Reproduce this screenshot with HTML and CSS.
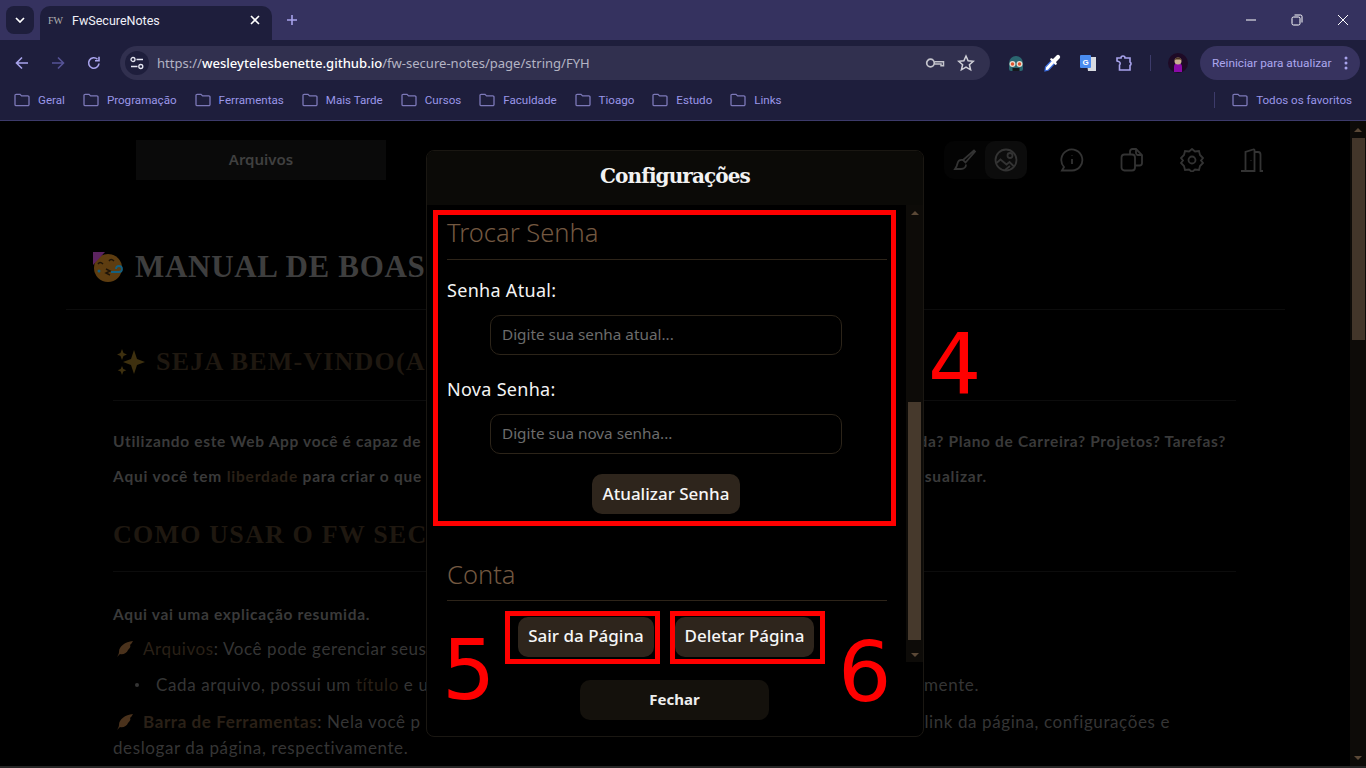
FILE: index.html
```html
<!DOCTYPE html>
<html lang="pt-BR">
<head>
<meta charset="utf-8">
<title>FwSecureNotes</title>
<link rel="stylesheet" href="styles.css">
</head>
<body>
<svg class="defs" width="0" height="0" aria-hidden="true">
  <symbol id="folder" viewBox="0 0 16 14"><path d="M1 2.500A1.200 1.200 0 0 1 2.200 1.300H6l1.600 1.600h6.200A1.200 1.200 0 0 1 15 4.100v7.400a1.200 1.200 0 0 1-1.200 1.200H2.200A1.200 1.200 0 0 1 1 11.500z" fill="none" stroke="currentColor" stroke-width="1.300"/></symbol>
  <symbol id="leaf" viewBox="0 0 18 18"><path d="M1 17C2 15 3 14 3 12 3 6 9 2 17 1 16 3 15 4 14 5 15 6 14 8 12 10 11 13 7 15 4 14 3 15 2 16 1 17z" fill="#4a321c"/></symbol>
</svg>
<div class="stage">
  <header class="chrome">
    <div class="tabstrip">
      <button class="tab-menu"><svg width="10" height="6" viewBox="0 0 10 6"><path d="M1 1l4 4 4-4" fill="none" stroke="#fff" stroke-width="1.700"/></svg></button>
      <div class="tab">
        <span class="favicon">FW</span>
        <span class="tab-title">FwSecureNotes</span>
        <svg class="tab-x" width="10" height="10" viewBox="0 0 10 10"><path d="M1 1l8 8M9 1l-8 8" stroke="#fff" stroke-width="1.600"/></svg>
      </div>
      <svg class="tab-plus" width="12" height="12" viewBox="0 0 12 12"><path d="M6 1v10M1 6h10" stroke="#a8a3ec" stroke-width="1.600"/></svg>
      <div class="win-controls">
        <svg width="12" height="12" viewBox="0 0 12 12"><path d="M1 6h10" stroke="#fff"/></svg>
        <svg width="12" height="12" viewBox="0 0 12 12"><rect x="1" y="3" width="8" height="8" rx="1.500" fill="none" stroke="#fff"/><path d="M3.500 1h6a1.500 1.500 0 0 1 1.500 1.500v6" fill="none" stroke="#fff"/></svg>
        <svg width="12" height="12" viewBox="0 0 12 12"><path d="M1 1l10 10M11 1L1 11" stroke="#fff"/></svg>
      </div>
    </div>
    <div class="toolbar">
      <svg class="nav-ico" width="16" height="16" viewBox="0 0 16 16"><path d="M14 8H2.500M8 2.500L2.500 8 8 13.500" fill="none" stroke="#a8a3ec" stroke-width="1.600"/></svg>
      <svg class="nav-ico" width="16" height="16" viewBox="0 0 16 16"><path d="M2 8h11.500M8 2.500L13.500 8 8 13.500" fill="none" stroke="#565396" stroke-width="1.600"/></svg>
      <svg class="nav-ico" width="16" height="16" viewBox="0 0 16 16"><path d="M13 8.500A5.200 5.200 0 1 1 11.500 4.300M13 1.800v4h-4" fill="none" stroke="#a8a3ec" stroke-width="1.600"/></svg>
      <div class="omnibox">
        <span class="tune"><svg width="14" height="14" viewBox="0 0 14 14"><circle cx="3" cy="3.500" r="2" fill="none" stroke="#e6e6f2" stroke-width="1.300"/><path d="M6.500 3.500H13M1 10.500h6.500" stroke="#e6e6f2" stroke-width="1.400"/><circle cx="10.800" cy="10.500" r="2" fill="none" stroke="#e6e6f2" stroke-width="1.300"/></svg></span>
        <span class="url">https://<b>wesleytelesbenette.github.io</b>/fw-secure-notes/page/string/FYH</span>
        <svg class="omni-ico" width="20" height="12" viewBox="0 0 20 12"><circle cx="5.500" cy="6" r="3.800" fill="none" stroke="#c4c4cc" stroke-width="1.700"/><path d="M9.500 4.700h9v4h-2.500v-1.700h-6.500" fill="none" stroke="#c4c4cc" stroke-width="1.500"/></svg>
        <svg class="omni-ico" width="18" height="18" viewBox="0 0 18 18"><path d="M9 2l2.100 4.800 5.200.5-3.900 3.400 1.200 5.100L9 13.100 4.400 15.800l1.200-5.100L1.700 7.300l5.200-.5z" fill="none" stroke="#d0d0d8" stroke-width="1.500"/></svg>
      </div>
      <div class="ext-row">
        <svg class="ext" width="18" height="18" viewBox="0 0 18 18"><path d="M2 9a7 7 0 0 1 14 0v6a2 2 0 0 1-2 2H4a2 2 0 0 1-2-2z" fill="#2b6670"/><circle cx="5.500" cy="10" r="3" fill="#e8dcd0"/><circle cx="12.500" cy="10" r="3" fill="#e8dcd0"/><circle cx="5.500" cy="10" r="1.700" fill="#e0522c"/><circle cx="12.500" cy="10" r="1.700" fill="#e0522c"/><rect x="5.500" y="14" width="7" height="3" fill="#15181c"/></svg>
        <svg class="ext" width="18" height="18" viewBox="0 0 18 18"><path d="M2 17l.5-4 6.500-7 3 3-6.500 7z" fill="#fff" stroke="#3c6ee0" stroke-width="1.200"/><path d="M8 4l2 1 3.500-3.500a2 2 0 0 1 3 3L13 8l1 2-1.500 1L7 5.500z" fill="#fff"/></svg>
        <svg class="ext" width="18" height="18" viewBox="0 0 18 18"><path d="M7 3h10v14H9z" fill="#d8dbe0"/><rect x="1" y="1" width="11" height="13" rx="1" fill="#4a8cf0"/><text x="6.500" y="10.500" class="ext-g">G</text></svg>
        <svg class="ext" width="18" height="18" viewBox="0 0 18 18"><path d="M2 4h4a2 2 0 0 1 4 0h5v4a2 2 0 0 1 0 3.500V16H4.500V11a2 2 0 0 0-1-3.500L2 7z" fill="none" stroke="#a8a3ec" stroke-width="1.600"/></svg>
      </div>
      <span class="tb-sep"></span>
      <svg class="avatar" width="20" height="20" viewBox="0 0 20 20"><circle cx="10" cy="10" r="10" fill="#1e0a26"/><path d="M6 19v-5a3 3 0 0 1 8 0v5z" fill="#8a0aa8"/><circle cx="10" cy="8" r="3.500" fill="#c8b090"/><path d="M6.500 8a3.500 3.500 0 0 1 7 0l-1-1.500h-5z" fill="#4a3420"/></svg>
      <div class="update-pill">
        <span>Reiniciar para atualizar</span>
        <svg width="4" height="14" viewBox="0 0 4 14"><circle cx="2" cy="2" r="1.500" fill="#a8a3ec"/><circle cx="2" cy="7" r="1.500" fill="#a8a3ec"/><circle cx="2" cy="12" r="1.500" fill="#a8a3ec"/></svg>
      </div>
    </div>
    <nav class="bookmarks">
      <span class="bm"><svg class="bm-ico"><use href="#folder"/></svg>Geral</span>
      <span class="bm"><svg class="bm-ico"><use href="#folder"/></svg>Programação</span>
      <span class="bm"><svg class="bm-ico"><use href="#folder"/></svg>Ferramentas</span>
      <span class="bm"><svg class="bm-ico"><use href="#folder"/></svg>Mais Tarde</span>
      <span class="bm"><svg class="bm-ico"><use href="#folder"/></svg>Cursos</span>
      <span class="bm"><svg class="bm-ico"><use href="#folder"/></svg>Faculdade</span>
      <span class="bm"><svg class="bm-ico"><use href="#folder"/></svg>Tioago</span>
      <span class="bm"><svg class="bm-ico"><use href="#folder"/></svg>Estudo</span>
      <span class="bm"><svg class="bm-ico"><use href="#folder"/></svg>Links</span>
      <span class="bm-end"><span class="bm-sep"></span><span class="bm"><svg class="bm-ico"><use href="#folder"/></svg>Todos os favoritos</span></span>
    </nav>
  </header>

  <div class="page">
    <main class="content">
      <div class="app-bar">
        <div class="files-tab">Arquivos</div>
        <div class="tools">
          <div class="mode-group">
            <span class="mode"><svg class="tool-ico" viewBox="0 0 24 24"><path d="M21 2.500L10 12l2.500 2.500L22 3.500zM10 12c-3-.5-5 1-5.500 3.500S3 19.500 2 21h6c3 0 5-2 5-4.500" /></svg></span>
            <span class="mode active"><svg class="tool-ico" viewBox="0 0 24 24"><circle cx="12" cy="12" r="10.500"/><circle cx="16" cy="7.500" r="2.500"/><path d="M2.500 15l4-3.500 6 5 3-2.500 4.500 4.500M11 22l5-4"/></svg></span>
          </div>
          <svg class="tool-ico" viewBox="0 0 24 24"><path d="M2 22.500l2-3.500A10.500 10.500 0 1 1 12 22.500z"/><path d="M12 11v5M12 7.500v.5"/></svg>
          <svg class="tool-ico" viewBox="0 0 24 24"><path d="M10 6.500V3.500A2.500 2.500 0 0 1 12.500 1h3.500l6 6v8a2.500 2.500 0 0 1-2.500 2.500H15"/><path d="M16 1v4a2 2 0 0 0 2 2h4"/><rect x="1.500" y="6.500" width="13.500" height="16" rx="3"/></svg>
          <svg class="tool-ico" viewBox="0 0 24 24"><circle cx="12" cy="12" r="3.500"/><path d="M12 1l3 2.500 4-.5 1 4 3 3-2 2.500 2 2.500-3 3-1 4-4-.5-3 2.500-3-2.500-4 .5-1-4-3-3 2-2.500-2-2.500 3-3 1-4 4 .5z"/></svg>
          <svg class="tool-ico" viewBox="0 0 24 24"><path d="M1 23h4.500V4L13 1.500a1 1 0 0 1 1.500 1V23H5.500M14.500 4H18a2.500 2.500 0 0 1 2.500 2.500V23H23M11 12v.5"/></svg>
        </div>
      </div>

      <div class="doc-title">
        <svg class="party" width="31" height="30" viewBox="0 0 31 30"><circle cx="16" cy="16" r="14" fill="#5e3d10"/><path d="M1 0h12L1 13z" fill="#5c2460"/><path d="M6 12q2-3 5 0M17 9q2-3 5 0" fill="none" stroke="#1e1408" stroke-width="1.500"/><path d="M14 17l4 2-4 2 4 2" fill="none" stroke="#1e1408" stroke-width="1.500"/><path d="M19 20h8a3 3 0 1 0-3-3" fill="none" stroke="#146080" stroke-width="1.800"/><circle cx="7" cy="19" r="1.500" fill="#146080"/></svg>
        <h1>Manual de Boas</h1>
      </div>

      <section class="doc-body">
        <h2 class="first"><svg class="spark" width="30" height="28" viewBox="0 0 30 28"><path d="M18 2l3 9 8 3-8 3-3 9-3-9-8-3 8-3z" fill="#3e300f"/><path d="M6 1l1.500 4L11 6.500 7.500 8 6 12 4.500 8 1 6.500 4.500 5zM6 18l1.300 3 3 1.300-3 1.300L6 27l-1.300-3.400-3-1.300 3-1.300z" fill="#3e300f"/></svg>Seja Bem-Vindo(a</h2>
        <div class="row r1"><span>Utilizando este Web App você é capaz de</span><span>da? Plano de Carreira? Projetos? Tarefas?</span></div>
        <div class="row r2"><span>Aqui você tem <em>liberdade</em> para criar o que</span><span>isualizar.</span></div>
        <h2 class="second">Como usar o Fw Sec</h2>
        <p class="lead">Aqui vai uma explicação resumida.</p>
        <p class="item i1"><svg class="leaf"><use href="#leaf"/></svg><em>Arquivos</em>: Você pode gerenciar seus</p>
        <div class="row bullet"><span><span class="dot"></span>Cada arquivo, possui um <em>título</em> e u</span><span>mente.</span></div>
        <div class="row item i2"><span><svg class="leaf"><use href="#leaf"/></svg><em>Barra de Ferramentas</em>: Nela você p</span><span>link da página, configurações e</span></div>
        <p class="last">deslogar da página, respectivamente.</p>
      </section>
    </main>
    <aside class="page-scroll">
      <span class="arr up"></span>
      <span class="page-thumb"></span>
      <span class="page-spacer"></span>
      <span class="arr down"></span>
    </aside>
  </div>

  <div class="modal">
    <div class="modal-head">Configurações</div>
    <div class="modal-main">
      <div class="modal-scroll">
        <h3 class="sec">Trocar Senha</h3>
        <label class="lbl lbl-1">Senha Atual:</label>
        <div class="field">Digite sua senha atual...</div>
        <label class="lbl lbl-2">Nova Senha:</label>
        <div class="field">Digite sua nova senha...</div>
        <button class="btn btn-update">Atualizar Senha</button>
        <h3 class="sec sec-2">Conta</h3>
        <div class="acct">
          <button class="btn btn-exit">Sair da Página</button>
          <button class="btn btn-del">Deletar Página</button>
        </div>
      </div>
      <div class="modal-bar">
        <span class="arr up"></span>
        <span class="modal-track"></span>
        <span class="modal-thumb"></span>
        <span class="arr down"></span>
      </div>
    </div>
    <div class="modal-foot"><button class="btn-close">Fechar</button></div>
  </div>

  <div class="mark mark-4"></div>
  <div class="mark mark-5"></div>
  <div class="mark mark-6"></div>
  <span class="num num-4">4</span>
  <span class="num num-5">5</span>
  <span class="num num-6">6</span>
</div>
</body>
</html>
```
FILE: styles.css
```css
* { box-sizing: border-box; }
html, body { margin: 0; padding: 0; height: 768px; overflow: hidden; background: #000; }
.defs { position: absolute; }
.stage { position: relative; width: 1366px; height: 768px; overflow: hidden; font-family: "Noto Sans", sans-serif; }

/* browser chrome */
.chrome { height: 121px; background: #1e1e3c; border-bottom: 1px solid #3c3a6a; font-family: "Roboto", sans-serif; }
.tabstrip { height: 40px; background: #35325f; display: flex; align-items: flex-start; padding: 6px 0 0 6px; }
.tab-menu { width: 28px; height: 28px; border: 0; padding: 0; border-radius: 8px; background: #1e1e3c; display: flex; align-items: center; justify-content: center; }
.tab { width: 232px; height: 34px; margin-left: 6px; background: #1e1e3c; border-radius: 10px 10px 0 0; display: flex; align-items: center; padding: 0 0 6px 8px; }
.favicon { width: 16px; font: 10px "Liberation Serif", serif; color: #b0b0b0; margin-right: 8px; }
.tab-title { color: #f0f0f8; font-size: 12.5px; flex: 1; }
.tab-x { margin-right: 12px; }
.tab-plus { margin: 8px 0 0 14px; }
.win-controls { margin-left: auto; display: flex; gap: 34px; padding: 8px 17px 0 0; }
.toolbar { height: 40px; display: flex; align-items: center; padding: 5px 0 0 14px; }
.nav-ico { margin-right: 20px; }
.nav-ico:nth-child(3) { margin-right: 18px; }
.omnibox { width: 870px; height: 34px; background: #31304f; border-radius: 17px; display: flex; align-items: center; padding: 0 15px 0 5px; }
.tune { width: 24px; height: 24px; border-radius: 50%; background: #1e1e3c; display: flex; align-items: center; justify-content: center; }
.url { margin-left: 8px; flex: 1; font: 13.05px "Noto Sans", sans-serif; color: #b4b4c4; white-space: nowrap; }
.url b { font-weight: 500; color: #fff; }
.omni-ico { margin-left: 12px; }
.ext-row { display: flex; gap: 18px; margin-left: 17px; align-items: center; }
.ext { display: block; }
.ext-g { font: bold 8px "Liberation Sans", sans-serif; fill: #fff; text-anchor: middle; }
.tb-sep { width: 1px; height: 16px; background: #3d3b6b; margin: 0 17px 0 17px; }
.avatar { margin-right: 12px; }
.update-pill { width: 160px; height: 34px; background: #37335f; border-radius: 17px; display: flex; align-items: center; justify-content: space-between; padding: 0 12px; color: #aca7ee; font-size: 11.8px; white-space: nowrap; }
.bookmarks { height: 40px; display: flex; align-items: center; padding: 0 14px; gap: 18px; }
.bm { display: flex; align-items: center; gap: 8px; color: #9a96e8; font-size: 11.6px; white-space: nowrap; }
.bm-ico { width: 16px; height: 14px; color: #7c78b8; }
.bm-end { margin-left: auto; display: flex; align-items: center; gap: 17px; }
.bm-sep { width: 1px; height: 16px; background: #3d3b6b; }

/* dimmed page */
.page { height: 647px; display: flex; background: #000; border-bottom: 2px solid #262626; }
.content { width: 1350px; height: 645px; overflow: hidden; }
.app-bar { height: 40px; margin-top: 19px; padding-left: 136px; display: flex; align-items: center; }
.files-tab { width: 250px; height: 40px; background: #0a0a0a; display: flex; align-items: center; justify-content: center; color: #404040; font: 600 15px "Noto Sans", sans-serif; padding-bottom: 3px; }
.tools { margin-left: 558px; display: flex; align-items: center; gap: 36px; }
.mode-group { display: flex; background: #040404; border-radius: 10px; height: 38px; width: 83px; margin-right: -3px; }
.mode { width: 41px; height: 38px; display: flex; align-items: center; justify-content: center; }
.mode.active { width: 42px; background: #0c0c0c; border-radius: 10px; }
.tool-ico { width: 24px; height: 24px; fill: none; stroke: #333; stroke-width: 1.8; display: block; }
.doc-title { margin: 57px 65px 0 66px; height: 73px; padding: 0 0 12px 26px; display: flex; align-items: center; border-bottom: 1px solid #0c0c0c; overflow: hidden; white-space: nowrap; }
.party { flex: none; margin-right: 12px; }
h1 { margin: 0; font: 700 31px/60px "Liberation Serif", serif; text-transform: uppercase; color: #3e3e3e; letter-spacing: .7px; }
.doc-body { margin: 0 114px 0 113px; }
h2 { margin: 0; font: 700 26px/40px "Liberation Serif", serif; text-transform: uppercase; color: #1f1810; white-space: nowrap; letter-spacing: 1.2px; }
h2.first { margin-top: 32px; padding-bottom: 18px; border-bottom: 1px solid #0c0c0c; display: flex; align-items: center; gap: 10px; padding-left: 3px; }
h2.second { margin-top: 21px; padding-bottom: 16px; border-bottom: 1px solid #0c0c0c; }
.spark { flex: none; }
.row { display: flex; justify-content: space-between; white-space: nowrap; }
em { font-style: normal; color: #2a2017; }
.r1, .r2, .lead { font: 700 15.5px/35px "Lato", sans-serif; color: #3a3a3a; letter-spacing: .66px; }
.r1 { margin-top: 23px; padding-right: 10px; }
.r2 { padding-right: 249px; letter-spacing: .8px; }
.lead { margin: 29px 0 0; line-height: 26px; }
.item, .bullet, .last { font: 400 17px/26px "Lato", sans-serif; color: #353535; margin: 0; white-space: nowrap; letter-spacing: .6px; }
.i1 { margin-top: 9px; }
.bullet { margin-top: 10px; padding: 0 257px 0 22px; }
.dot { display: inline-block; width: 4px; height: 4px; margin-right: 17px; vertical-align: 4px; border-radius: 50%; background: #353535; }
.i2 { margin-top: 11px; padding-right: 66px; }
.i2 em { font-weight: 700; }
.leaf { width: 18px; height: 18px; margin: 0 9px 0 3px; vertical-align: -3px; }

.page-scroll { width: 16px; height: 645px; background: #0d0b08; display: flex; flex-direction: column; align-items: center; padding-top: 7px; }
.page-thumb { width: 13px; height: 202px; margin-top: 6px; background: #43362a; flex: none; }
.page-spacer { flex: 1; }
.arr { width: 0; height: 0; border-left: 4px solid transparent; border-right: 4px solid transparent; flex: none; }
.arr.up { border-bottom: 4px solid #5a4836; }
.arr.down { border-top: 4px solid #5a4836; margin-bottom: 6px; }

/* modal */
.modal { position: absolute; left: 426px; top: 150px; width: 498px; height: 587px; background: #000; border: 1px solid #1a1712; border-radius: 8px; overflow: hidden; }
.modal-head { height: 54px; background: #0b0a07; display: flex; align-items: center; justify-content: center; color: #f2f2f2; font: 700 20px/1 "DejaVu Serif", serif; letter-spacing: -.9px; padding-bottom: 4px; }
.modal-main { height: 457px; display: flex; }
.modal-scroll { width: 479px; padding: 10px 19px 0 20px; overflow: hidden; }
.sec { margin: 0; height: 45px; padding-bottom: 9px; font: 300 25.5px/34px "Noto Sans", sans-serif; color: #735840; border-bottom: 1px solid #2d2419; }
.sec-2 { margin-top: 43px; height: 44px; }
.lbl { display: block; height: 24px; font: 400 18px/24px "Noto Sans", sans-serif; letter-spacing: .3px; color: #f4f4f4; }
.lbl-1 { margin-top: 18px; }
.lbl-2 { margin-top: 22px; }
.field { width: 352px; height: 40px; margin: 13px 0 0 43px; border: 1px solid #2c2419; border-radius: 10px; padding: 0 11px 2px; display: flex; align-items: center; color: #6c6c6c; font-size: 15.3px; }
.btn { height: 40px; border: 0; border-radius: 10px; background: #2e251c; color: #f6f6f6; font: 500 17px "Noto Sans", sans-serif; padding: 0 0 2px; display: block; }
.btn-update { width: 148px; margin: 20px 0 0 145px; }
.acct { display: flex; gap: 21px; margin: 16px 0 0 71px; }
.btn-exit { width: 136px; padding-bottom: 4px; }
.btn-del { width: 139px; padding-bottom: 4px; }
.modal-bar { width: 17px; background: #0d0b08; display: flex; flex-direction: column; align-items: center; padding-top: 6px; }
.modal-track { height: 187px; flex: none; }
.modal-thumb { width: 13px; height: 238px; background: #46392c; flex: none; margin-bottom: 13px; }
.modal-foot { height: 74px; padding: 18px 0 0 153px; }
.btn-close { width: 189px; height: 40px; border: 0; border-radius: 10px; background: #14110c; color: #eee; font: 700 15px "Noto Sans", sans-serif; padding: 0 0 2px; display: block; }

/* annotations */
.mark { position: absolute; border: 5px solid #f00; }
.mark-4 { left: 433px; top: 210px; width: 463px; height: 316px; }
.mark-5 { left: 505px; top: 611px; width: 155px; height: 53px; }
.mark-6 { left: 670px; top: 611px; width: 155px; height: 53px; }
.num { position: absolute; color: #f00; font: 84px/84px "DejaVu Sans", sans-serif; }
.num-4 { left: 928px; top: 322px; }
.num-5 { left: 442px; top: 628px; }
.num-6 { left: 838px; top: 630px; }
```
